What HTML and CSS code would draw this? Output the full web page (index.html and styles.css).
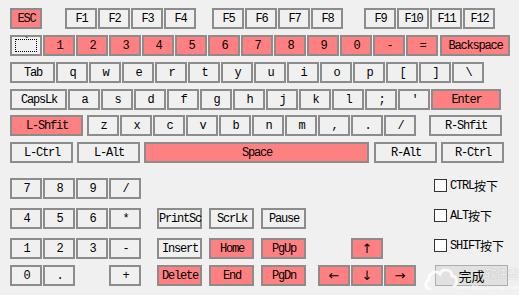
FILE: index.html
```html
<!DOCTYPE html>
<html lang="zh-CN">
<head>
    <meta charset="UTF-8">
    <title>软键盘</title>
    <link rel="stylesheet" href="styles.css">
</head>
<body>
    <div class="board">
        <!-- function row -->
        <div class="row">
            <div class="key hot">ESC</div>
            <div class="group g-f1">
                <div class="key">F1</div>
                <div class="key">F2</div>
                <div class="key">F3</div>
                <div class="key">F4</div>
            </div>
            <div class="group g-f5">
                <div class="key">F5</div>
                <div class="key">F6</div>
                <div class="key">F7</div>
                <div class="key">F8</div>
            </div>
            <div class="group g-f9">
                <div class="key">F9</div>
                <div class="key">F10</div>
                <div class="key">F11</div>
                <div class="key">F12</div>
            </div>
        </div>

        <!-- number row -->
        <div class="row">
            <div class="key tilde"><span class="focus">`</span></div>
            <div class="key hot">1</div>
            <div class="key hot">2</div>
            <div class="key hot">3</div>
            <div class="key hot">4</div>
            <div class="key hot">5</div>
            <div class="key hot">6</div>
            <div class="key hot">7</div>
            <div class="key hot">8</div>
            <div class="key hot">9</div>
            <div class="key hot">0</div>
            <div class="key hot">-</div>
            <div class="key hot">=</div>
            <div class="key hot w-back">Backspace</div>
        </div>

        <div class="row">
            <div class="key w-tab">Tab</div>
            <div class="key">q</div>
            <div class="key">w</div>
            <div class="key">e</div>
            <div class="key">r</div>
            <div class="key">t</div>
            <div class="key">y</div>
            <div class="key">u</div>
            <div class="key">i</div>
            <div class="key">o</div>
            <div class="key">p</div>
            <div class="key">[</div>
            <div class="key">]</div>
            <div class="key">\</div>
        </div>

        <div class="row">
            <div class="key w-caps">CapsLk</div>
            <div class="key">a</div>
            <div class="key">s</div>
            <div class="key">d</div>
            <div class="key">f</div>
            <div class="key">g</div>
            <div class="key">h</div>
            <div class="key">j</div>
            <div class="key">k</div>
            <div class="key">l</div>
            <div class="key">;</div>
            <div class="key">'</div>
            <div class="key hot w-enter">Enter</div>
        </div>

        <div class="row row-shift">
            <div class="key hot w-shift">L-Shfit</div>
            <div class="key k-z">z</div>
            <div class="key">x</div>
            <div class="key">c</div>
            <div class="key">v</div>
            <div class="key">b</div>
            <div class="key">n</div>
            <div class="key">m</div>
            <div class="key">,</div>
            <div class="key">.</div>
            <div class="key">/</div>
            <div class="key w-shift r-shift">R-Shfit</div>
        </div>

        <div class="row row-ctrl">
            <div class="key w-mod">L-Ctrl</div>
            <div class="key w-mod">L-Alt</div>
            <div class="key hot w-space">Space</div>
            <div class="key w-mod">R-Alt</div>
            <div class="key w-mod">R-Ctrl</div>
        </div>

        <!-- numpad, navigation, arrows, options -->
        <div class="lower">
            <div class="brow">
                <div class="group pad">
                    <div class="key">7</div>
                    <div class="key">8</div>
                    <div class="key">9</div>
                    <div class="key">/</div>
                </div>
                <label class="opt"><span class="box"></span>CTRL<span class="cjk">按下</span></label>
            </div>
            <div class="brow">
                <div class="group pad">
                    <div class="key">4</div>
                    <div class="key">5</div>
                    <div class="key">6</div>
                    <div class="key">*</div>
                </div>
                <div class="group nav">
                    <div class="key">PrintSc</div>
                    <div class="key">ScrLk</div>
                    <div class="key">Pause</div>
                </div>
                <label class="opt"><span class="box"></span>ALT<span class="cjk">按下</span></label>
            </div>
            <div class="brow">
                <div class="group pad">
                    <div class="key">1</div>
                    <div class="key">2</div>
                    <div class="key">3</div>
                    <div class="key">-</div>
                </div>
                <div class="group nav">
                    <div class="key">Insert</div>
                    <div class="key hot">Home</div>
                    <div class="key hot">PgUp</div>
                </div>
                <div class="group arrows">
                    <div class="key blank"></div>
                    <div class="key hot">&#8593;</div>
                    <div class="key blank"></div>
                </div>
                <label class="opt"><span class="box"></span>SHIFT<span class="cjk">按下</span></label>
            </div>
            <div class="brow">
                <div class="group pad">
                    <div class="key">0</div>
                    <div class="key">.</div>
                    <div class="key blank"></div>
                    <div class="key">+</div>
                </div>
                <div class="group nav">
                    <div class="key hot">Delete</div>
                    <div class="key hot">End</div>
                    <div class="key hot">PgDn</div>
                </div>
                <div class="group arrows">
                    <div class="key hot">&#8592;</div>
                    <div class="key hot">&#8595;</div>
                    <div class="key hot">&#8594;</div>
                </div>
                <button class="done">完成</button>
            </div>
        </div>
    </div>

    <!-- site watermark laid over the corner -->
    <div class="watermark">
        <svg class="wm-cloud" width="34" height="30" viewBox="0 0 34 30">
            <path d="M6 27 C1 27 0 20 5 18 C4 11 12 8 16 12 C18 6 28 7 28 14 C33 14 34 22 30 24" fill="none" stroke="#fff" stroke-width="3" stroke-linecap="round"/>
        </svg>
        <span class="wm-name">软件园</span>
        <span class="wm-url">www.52maicong.com</span>
    </div>
</body>
</html>
```

FILE: styles.css
```css
body {
    margin: 0;
    background-color: #f0f0f0;
    font-family: "Liberation Mono", "Noto Sans CJK SC", monospace;
    font-size: 12px;
    letter-spacing: -1.2px;
    color: #000;
    overflow: hidden;
}

.board {
    padding: 8px 0 0 10px;
}

.row {
    display: flex;
    gap: 1px;
    height: 21px;
    margin-bottom: 6px;
}

.group {
    display: flex;
    gap: 1px;
}

.key {
    box-sizing: border-box;
    width: 32px;
    height: 21px;
    border: 2px solid #8c8c8c;
    background-color: #f0f0f0;
    display: flex;
    align-items: center;
    justify-content: center;
    white-space: nowrap;
    padding-left: 1px;
}

.key.hot {
    background-color: #ff8080;
}

.key.blank {
    visibility: hidden;
}

/* gaps in the function row */
.g-f1 { margin-left: 22px; }
.g-f5 { margin-left: 15px; }
.g-f9 { margin-left: 20px; }

.tilde {
    position: relative;
    align-items: flex-start;
}

.focus {
    position: absolute;
    left: 3px;
    right: 3px;
    top: 2px;
    bottom: 2px;
    border: 1px dotted #000;
    text-align: center;
    line-height: 6px;
}

.w-back { width: 70px; margin-left: 1px; }
.w-tab { width: 45px; }
.w-caps { width: 57px; }
.w-enter { width: 70px; }

.row-shift {
    margin-top: -1px;
}

.w-shift { width: 73px; }
.k-z { margin-left: 3px; }
.r-shift { margin-left: 12px; }

.row-ctrl {
    gap: 0;
}

.w-mod { width: 63px; }
.row-ctrl .key + .key { margin-left: 4px; }
.row-ctrl .w-space { width: 225px; margin-left: 6px; }
.row-ctrl .w-space + .key { margin-left: 5px; }

/* lower block */
.lower {
    margin-top: 15px;
}

.brow {
    display: flex;
    align-items: center;
    height: 21px;
    margin-bottom: 9px;
}

.brow:nth-child(3) {
    margin-bottom: 6px;
}

.pad {
    width: 131px;
}

.nav {
    margin-left: 16px;
    gap: 7px;
}

.nav .key {
    width: 45px;
}

.arrows {
    margin-left: 12px;
}

.arrows .key {
    font-family: "DejaVu Sans", sans-serif;
    font-size: 13px;
    letter-spacing: 0;
    padding-left: 0;
}

.opt {
    position: absolute;
    left: 434px;
    display: flex;
    align-items: center;
    align-self: flex-start;
    height: 15px;
}

.box {
    box-sizing: border-box;
    width: 13px;
    height: 13px;
    border: 1px solid #333;
    background-color: #fff;
    margin-right: 3px;
}

.cjk {
    font-size: 12px;
    letter-spacing: 0;
}

.done {
    position: absolute;
    left: 435px;
    box-sizing: border-box;
    width: 73px;
    height: 21px;
    border: 1px solid #adadad;
    background-color: #e1e1e1;
    font-family: "Noto Sans CJK SC", sans-serif;
    font-size: 13px;
    letter-spacing: 0;
    color: #000;
    padding: 0;
    line-height: 1;
}

.watermark {
    position: absolute;
    left: 0;
    top: 0;
    width: 519px;
    height: 295px;
    color: rgba(255, 255, 255, 0.9);
    font-family: "Noto Sans CJK SC", sans-serif;
    letter-spacing: 0;
    pointer-events: none;
}

.wm-cloud {
    position: absolute;
    left: 424px;
    top: 262px;
    opacity: 0.8;
}

.wm-name {
    position: absolute;
    left: 485px;
    top: 266px;
    font-size: 11px;
    line-height: 14px;
    white-space: nowrap;
    text-shadow: 0 0 1px rgba(0, 0, 0, 0.3);
}

.wm-url {
    position: absolute;
    left: 457px;
    top: 284px;
    font-family: "Liberation Mono", monospace;
    font-size: 6px;
    line-height: 8px;
    white-space: nowrap;
}
```
